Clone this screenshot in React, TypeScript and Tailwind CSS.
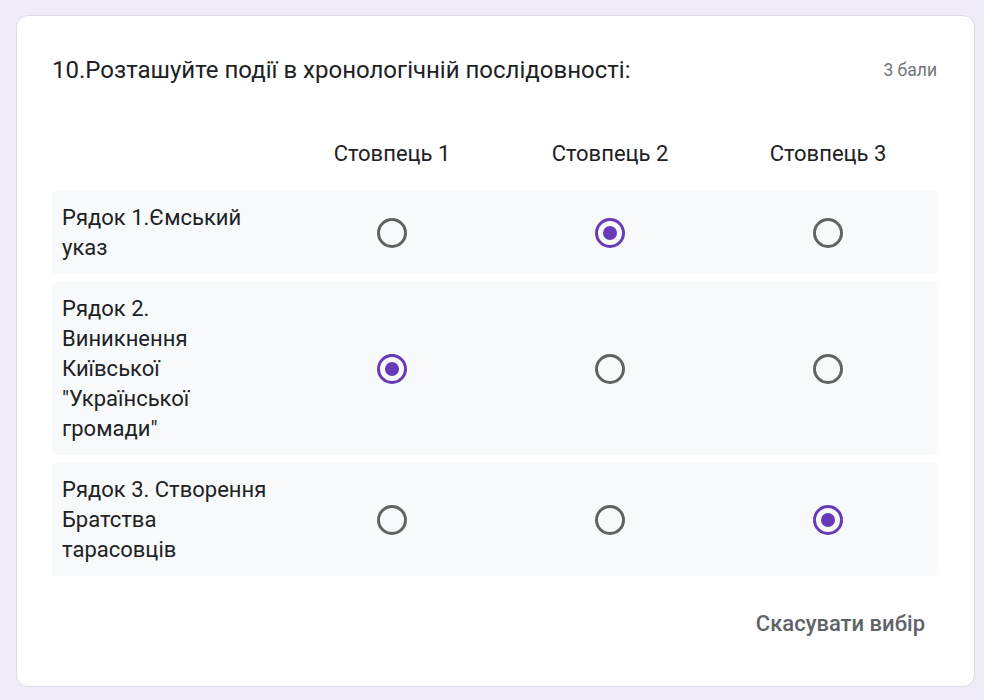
import { useState } from 'react'

const COLUMNS = ['Стовпець 1', 'Стовпець 2', 'Стовпець 3']

const ROWS = [
  { label: 'Рядок 1.Ємський указ', pick: 1 },
  { label: 'Рядок 2. Виникнення Київської "Української громади"', pick: 0 },
  { label: 'Рядок 3. Створення Братства тарасовців', pick: 2 },
]

function Radio({ checked, onClick }: { checked: boolean; onClick: () => void }) {
  return (
    <button
      onClick={onClick}
      className={`w-[30px] h-[30px] rounded-full border-[3px] flex items-center justify-center ${
        checked ? 'border-[#673ab7]' : 'border-[#5f6368]'
      }`}
    >
      {checked && <span className="w-[14px] h-[14px] rounded-full bg-[#673ab7]" />}
    </button>
  )
}

export default function App() {
  const [picks, setPicks] = useState<(number | null)[]>(ROWS.map(r => r.pick))

  return (
    <div className="min-h-[700px] bg-[#f0ebf8] pt-[15px] pl-[16px] pr-[9px] pb-[13px]" style={{ fontFamily: 'Roboto, Arial, sans-serif' }}>
      <div className="bg-white rounded-[12px] border border-[#dadce0] h-[672px] pl-[35px] pr-[37px] pt-[40px]">
        {/* Title */}
        <div className="flex items-start justify-between">
          <p className="text-[24px] leading-[28px] text-[#202124]">
            10.Розташуйте події в хронологічній послідовності:
          </p>
          <p className="text-[17.5px] leading-[28px] text-[#70757a]">3 бали</p>
        </div>

        {/* Grid header */}
        <div className="flex mt-[41px] h-[56px] items-center">
          <div className="w-[231px]" />
          {COLUMNS.map(c => (
            <div key={c} className="w-[218px] text-center text-[22px] text-[#202124]">{c}</div>
          ))}
        </div>

        {/* Rows */}
        <div className="flex flex-col gap-[8px] mt-[10px]">
          {ROWS.map((r, ri) => (
            <div key={ri} className="flex items-center bg-[#f8f9fa] rounded-[4px] pt-[12px] pb-[11px]">
              <div className="w-[231px] pl-[10px] pr-[11px] text-[22px] leading-[30px] text-[#202124]">{r.label}</div>
              {COLUMNS.map((_, ci) => (
                <div key={ci} className="w-[218px] flex justify-center">
                  <Radio
                    checked={picks[ri] === ci}
                    onClick={() => setPicks(p => p.map((v, i) => (i === ri ? ci : v)))}
                  />
                </div>
              ))}
            </div>
          ))}
        </div>

        {/* Clear */}
        <div className="flex justify-end mt-[25px]">
          <button
            onClick={() => setPicks(ROWS.map(() => null))}
            className="text-[22px] leading-[30px] font-medium text-[#5f6368] px-[12px] py-[8px]"
          >
            Скасувати вибір
          </button>
        </div>
      </div>
    </div>
  )
}
